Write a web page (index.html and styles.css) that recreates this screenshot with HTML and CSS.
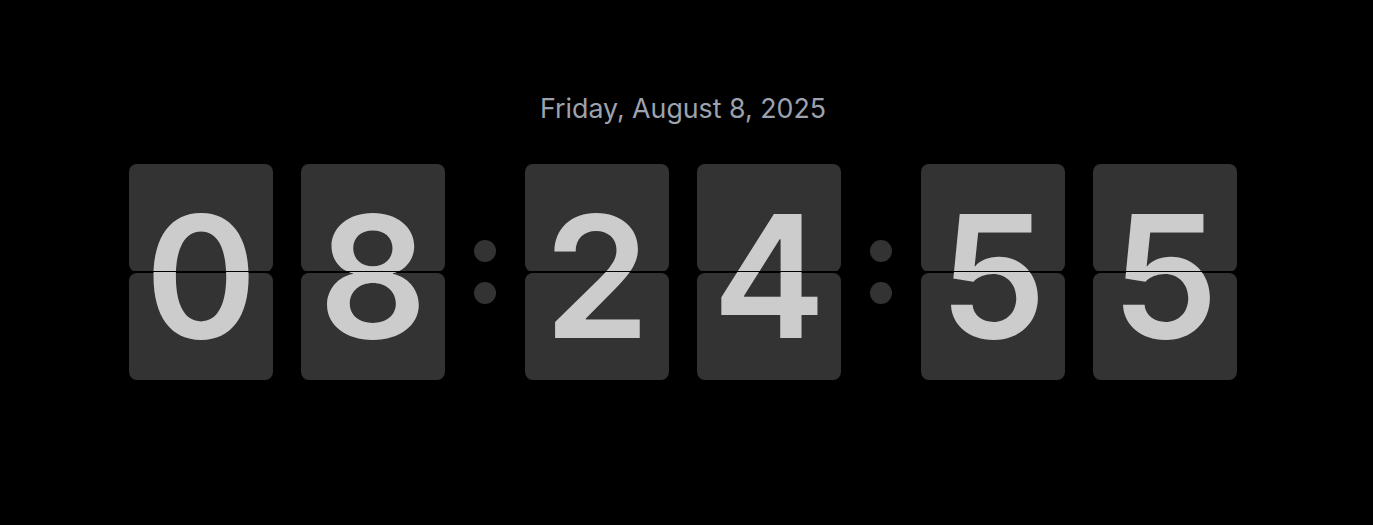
FILE: index.html
```html
<!DOCTYPE html>
<html lang="en">
<head>
<meta charset="utf-8">
<title>Flip Clock</title>
<link rel="stylesheet" href="styles.css">
</head>
<body>
<main class="clock">
  <div class="date">Friday, August 8, 2025</div>
  <div class="digits">
    <div class="card"><div class="half"></div><div class="half"></div><span class="num">0</span></div>
    <div class="card"><div class="half"></div><div class="half"></div><span class="num">8</span></div>
    <div class="colon"><span class="dot"></span><span class="dot"></span></div>
    <div class="card"><div class="half"></div><div class="half"></div><span class="num">2</span></div>
    <div class="card"><div class="half"></div><div class="half"></div><span class="num">4</span></div>
    <div class="colon"><span class="dot"></span><span class="dot"></span></div>
    <div class="card"><div class="half"></div><div class="half"></div><span class="num">5</span></div>
    <div class="card"><div class="half"></div><div class="half"></div><span class="num">5</span></div>
  </div>
</main>
</body>
</html>
```
FILE: styles.css
```css
html, body {
  margin: 0;
  padding: 0;
  background: #000;
  height: 100%;
}
body {
  font-family: Inter, "Liberation Sans", sans-serif;
}
.clock {
  display: flex;
  flex-direction: column;
  align-items: center;
  padding-top: 92px;
  padding-right: 7px;
}
.date {
  color: #9ca3af;
  font-size: 26.75px;
  line-height: 32px;
  margin-bottom: 40px;
}
.digits {
  display: flex;
  gap: 28px;
  align-items: center;
}
.card {
  position: relative;
  width: 144px;
  height: 216px;
  display: flex;
  flex-direction: column;
  gap: 1px;
}
.half {
  flex: 1;
  background: #333333;
  border-radius: 8px;
}
.num {
  position: absolute;
  inset: 0;
  display: flex;
  align-items: center;
  justify-content: center;
  padding-top: 8px;
  box-sizing: border-box;
  color: #cccccc;
  font-size: 170px;
  font-weight: 600;
  line-height: 1;
}
.card::after {
  content: "";
  position: absolute;
  left: 0;
  right: 0;
  top: 107px;
  height: 1px;
  background: #000;
}
.colon {
  width: 24px;
  display: flex;
  flex-direction: column;
  align-items: center;
  gap: 20px;
}
.dot {
  width: 22px;
  height: 22px;
  border-radius: 50%;
  background: #333333;
}
```
